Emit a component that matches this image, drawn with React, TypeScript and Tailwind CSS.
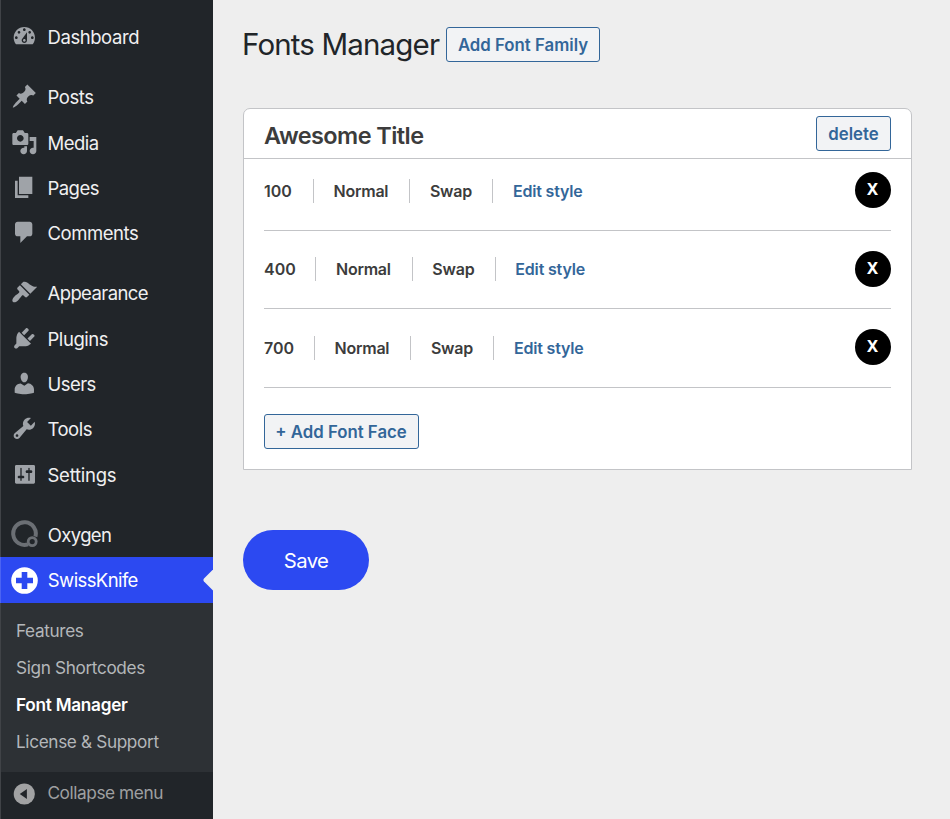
import React from "react";

type Item = { label: string; icon: string; track: string; gap?: boolean };

const items: Item[] = [
  { label: "Dashboard", track: "tracking-[-0.43px]", icon: "M3.76 16h12.48c1.1-1.37 1.76-3.11 1.76-5 0-4.42-3.58-8-8-8s-8 3.58-8 8c0 1.89.66 3.63 1.76 5zM10 4c.55 0 1 .45 1 1s-.45 1-1 1-1-.45-1-1 .45-1 1-1zM6 6c.55 0 1 .45 1 1s-.45 1-1 1-1-.45-1-1 .45-1 1-1zm8 0c.55 0 1 .45 1 1s-.45 1-1 1-1-.45-1-1 .45-1 1-1zm-5.37 5.55L12 7v6c0 1.1-.9 2-2 2s-2-.9-2-2c0-.57.24-1.08.63-1.45zM4 10c.55 0 1 .45 1 1s-.45 1-1 1-1-.45-1-1 .45-1 1-1zm12 0c.55 0 1 .45 1 1s-.45 1-1 1-1-.45-1-1 .45-1 1-1zm-5 3c0-.55-.45-1-1-1s-1 .45-1 1 .45 1 1 1 1-.45 1-1z" },
  { label: "Posts", gap: true, track: "tracking-[-0.4px]", icon: "M10.44 3.02l1.82-1.82 6.36 6.35-1.83 1.82c-1.05-.68-2.48-.57-3.41.36l-.75.75c-.92.93-1.04 2.35-.35 3.41l-1.83 1.82-2.41-2.41-2.8 2.79c-.42.42-3.38 2.71-3.8 2.29s1.86-3.39 2.28-3.81l2.79-2.79L4.1 9.36l1.83-1.82c1.05.69 2.48.57 3.4-.36l.75-.75c.93-.92 1.05-2.35.36-3.41z" },
  { label: "Media", track: "tracking-[-0.5px]", icon: "M13 11V4c0-.55-.45-1-1-1h-1.67L9 1H5L3.67 3H2c-.55 0-1 .45-1 1v7c0 .55.45 1 1 1h10c.55 0 1-.45 1-1zM7 4.5c1.38 0 2.5 1.12 2.5 2.5S8.38 9.5 7 9.5 4.5 8.38 4.5 7 5.62 4.5 7 4.5zM14 6h5v10.5c0 1.38-1.12 2.5-2.5 2.5S14 17.88 14 16.5s1.12-2.5 2.5-2.5c.17 0 .34.02.5.05V9h-3V6zm-4 8.05V13h2v3.5c0 1.38-1.12 2.5-2.5 2.5S7 17.88 7 16.5 8.12 14 9.5 14c.17 0 .34.02.5.05z" },
  { label: "Pages", track: "tracking-[-0.55px]", icon: "M6 15V2h10v13H6zm-1 1h8v2H3V5h2v11z" },
  { label: "Comments", track: "tracking-[-0.45px]", icon: "M5 2h9c1.1 0 2 .9 2 2v7c0 1.1-.9 2-2 2h-2l-5 5v-5H5c-1.1 0-2-.9-2-2V4c0-1.1.9-2 2-2z" },
  { label: "Appearance", gap: true, track: "tracking-[-0.6px]", icon: "M14.48 11.06L7.41 3.99l1.5-1.5c.5-.56 2.3-.47 3.51.32 1.21.8 1.43 1.28 2.91 2.1 1.18.64 2.45 1.26 4.45.85zm-.71.71L6.7 4.7 4.93 6.47c-.39.39-.39 1.02 0 1.41l1.06 1.06c.39.39.39 1.03 0 1.42-.6.6-1.43 1.11-2.21 1.69-.35.26-.7.53-1.01.84C1.43 14.23.4 16.08 1.4 17.07c.99 1 2.84-.03 4.18-1.36.31-.31.58-.66.85-1.02.57-.78 1.08-1.61 1.69-2.21.39-.39 1.02-.39 1.41 0l1.06 1.06c.39.39 1.02.39 1.41 0z" },
  { label: "Plugins", track: "tracking-[-0.45px]", icon: "M13.11 4.36L9.87 7.6 8 5.73l3.24-3.24c.35-.34 1.05-.2 1.56.32.52.51.66 1.21.31 1.55zm-8 1.77l.91-1.12 9.01 9.01-1.19.84c-.71.71-2.63 1.16-3.82 1.16H6.14L4.9 17.26c-.59.59-1.54.59-2.12 0-.59-.58-.59-1.53 0-2.12l1.24-1.24v-3.88c0-1.13.4-3.19 1.09-3.89zm7.26 3.97l3.24-3.24c.34-.35 1.04-.21 1.55.31.52.51.66 1.21.31 1.55l-3.24 3.25z" },
  { label: "Users", track: "tracking-[-0.55px]", icon: "M10 9.25c-2.27 0-2.73-3.44-2.73-3.44C7 4.02 7.82 2 9.97 2c2.16 0 2.98 2.02 2.71 3.81 0 0-.41 3.44-2.68 3.44zm0 2.57L12.72 10c2.39 0 4.52 2.33 4.52 4.53v2.49s-3.65 1.13-7.24 1.13c-3.65 0-7.24-1.13-7.24-1.13v-2.49c0-2.25 1.94-4.48 4.47-4.48z" },
  { label: "Tools", track: "tracking-[-0.5px]", icon: "M16.68 9.77c-1.34 1.34-3.3 1.67-4.95.99l-5.41 6.52c-.99.99-2.59.99-3.58 0s-.99-2.59 0-3.57l6.52-5.42c-.68-1.65-.35-3.61.99-4.95 1.28-1.28 3.12-1.62 4.72-1.06l-2.89 2.89 2.82 2.82 2.86-2.87c.53 1.58.18 3.39-1.08 4.65zM3.81 16.21c.4.39 1.04.39 1.43 0 .4-.4.4-1.04 0-1.43-.39-.4-1.03-.4-1.43 0-.39.39-.39 1.03 0 1.43z" },
  { label: "Settings", track: "tracking-[-0.25px]", icon: "M18 16V4c0-.55-.45-1-1-1H4c-.55 0-1 .45-1 1v12c0 .55.45 1 1 1h13c.55 0 1-.45 1-1zM8 11h1c.55 0 1 .45 1 1s-.45 1-1 1H8v1.5c0 .28-.22.5-.5.5s-.5-.22-.5-.5V13H6c-.55 0-1-.45-1-1s.45-1 1-1h1V5.5c0-.28.22-.5.5-.5s.5.22.5.5V11zm5-2h-1c-.55 0-1-.45-1-1s.45-1 1-1h1V5.5c0-.28.22-.5.5-.5s.5.22.5.5V7h1c.55 0 1 .45 1 1s-.45 1-1 1h-1v5.5c0 .28-.22.5-.5.5s-.5-.22-.5-.5V9z" },
];

const faces = [
  { weight: "100", w: "w-[49px]", h: "h-[72px]", pad: "pt-[13px]", drop: "mt-[7px]" },
  { weight: "400", w: "w-[51.4px]", h: "h-[78px]", pad: "pt-[20px]", drop: "mt-[6px]" },
  { weight: "700", w: "w-[50px]", h: "h-[79px]", pad: "pt-[20px]", drop: "mt-[7px]" },
];

const row = "flex h-[45.33px] shrink-0 items-center pl-[9.67px] text-[18.5px] leading-none";

function Label({ children, track }: { children: React.ReactNode; track: string }) {
  return <span className={"mt-[0.2px] ml-[10.2px] " + track}>{children}</span>;
}

function OutlineButton({ children, className }: { children: React.ReactNode; className: string }) {
  return (
    <button className={"flex h-[35px] items-center justify-center rounded-[3px] border border-[#336699] bg-[#f2f3f5] pt-[1.5px] text-[16.8px] leading-none font-semibold whitespace-nowrap text-[#336699] " + className}>
      {children}
    </button>
  );
}

function Sidebar() {
  return (
    <aside className="flex h-full w-[213px] shrink-0 flex-col border-l border-[#404347] bg-[#212529] pt-[14.8px] text-[#f0f0f1]">
      {items.map((it) => (
        <div key={it.label} className={row + (it.gap ? " mt-[14.67px]" : "")}>
          <svg viewBox="0 0 20 20" className="mb-[1.6px] h-[26.67px] w-[26.67px] fill-[#9fa3a8]">
            <path d={it.icon} />
          </svg>
          <Label track={it.track}>{it.label}</Label>
        </div>
      ))}
      <div className={row + " mt-[14.67px]"}>
        <svg viewBox="0 0 27 27" className="mb-[2px] h-[27px] w-[27px]" fill="none" stroke="#6b6f74">
          <path d="M17 24.3A11.3 11.3 0 1 1 24.4 16.6" strokeWidth="4" />
          <circle cx="21.2" cy="21.6" r="4" strokeWidth="2.8" />
        </svg>
        <Label track="tracking-[-0.65px]">Oxygen</Label>
      </div>
      <div className={row + " -ml-px justify-between border-l border-[#4c64f3] bg-[#2c49f1] text-white"}>
        <div className="flex items-center">
          <svg viewBox="0 0 27 27" className="h-[27px] w-[27px]">
            <circle cx="13.5" cy="13.5" r="13.3" fill="#fff" />
            <path d="M10.7 5h5.6v5.7H22v5.6h-5.7V22h-5.6v-5.7H5v-5.6h5.7z" fill="#2c49f1" />
          </svg>
          <Label track="tracking-[-0.6px]">SwissKnife</Label>
        </div>
        <svg viewBox="0 0 10.5 22" className="h-[22px] w-[10.5px] fill-[#eeeeee]">
          <path d="M10.5 0L1 9.6Q-.2 11 1 12.4L10.5 22z" />
        </svg>
      </div>
      <div className="flex h-[169.3px] shrink-0 flex-col bg-[#2d3135] pt-[9.8px] pl-[15px] text-[17.2px] tracking-[-0.35px] text-[#b4b7ba]">
        <span className="flex h-[37px] items-center">Features</span>
        <span className="flex h-[37px] items-center">Sign Shortcodes</span>
        <span className="flex h-[37px] items-center font-semibold tracking-[-0.26px] text-white">Font Manager</span>
        <span className="flex h-[37px] items-center">License &amp; Support</span>
      </div>
      <div className="flex h-[41px] items-center pl-[9.67px] text-[17.3px] leading-none text-[#9fa0a1]">
        <svg viewBox="0 0 26 26" className="mt-[2px] h-[26px] w-[26px]">
          <circle cx="13.3" cy="13" r="10.6" fill="#a1a2a3" />
          <path d="M15.9 8v10L8.8 13z" fill="#212529" />
        </svg>
        <Label track="tracking-[-0.45px] pl-[0.6px]">Collapse menu</Label>
      </div>
    </aside>
  );
}

export default function App() {
  return (
    <div className="flex h-[819px] w-[950px] overflow-hidden bg-[#eeeeee] font-['Inter','Liberation_Sans',sans-serif]">
      <Sidebar />
      <main className="flex flex-1 flex-col pt-[27px] pl-[30px]">
        <div className="flex h-[35px] items-center">
          <h1 className="-ml-px w-[204px] text-[29.5px] leading-none tracking-[-0.85px] whitespace-nowrap text-[#212529]">Fonts Manager</h1>
          <OutlineButton className="w-[154px]">Add Font Family</OutlineButton>
        </div>
        <section className="mt-[46px] h-[362px] w-[669px] rounded-t-[7px] border border-[#c3c4c7] bg-white">
          <header className="flex h-[50px] items-center justify-between border-b border-[#c3c4c7] px-[20px]">
            <h2 className="mt-[5px] text-[23.5px] leading-none font-semibold tracking-[-0.58px] text-[#3c3c3c]">Awesome Title</h2>
            <OutlineButton className="w-[75px]">delete</OutlineButton>
          </header>
          <div className="px-[20px]">
            {faces.map((f) => (
              <div key={f.weight} className={"flex items-start border-b border-[#c3c4c7] text-[16px] leading-[24px] font-semibold text-[#3c3c3c] " + f.h + " " + f.pad}>
                <div className={"flex h-[24px] " + f.drop}>
                  <span className={"shrink-0 " + f.w}>{f.weight}</span>
                  <span className="w-[96.3px] border-l border-[#c3c4c7] pl-[19.6px] tracking-[-0.25px]">Normal</span>
                  <span className="w-[83px] border-l border-[#c3c4c7] pl-[19.6px] tracking-[-0.2px]">Swap</span>
                  <span className="border-l border-[#c3c4c7] pl-[19.6px] tracking-[-0.17px] text-[#336699]">Edit style</span>
                </div>
                <button className="ml-auto flex h-[36px] w-[36px] items-center justify-center rounded-full bg-black pr-[1px] pb-[2px] font-['Noto_Sans','Liberation_Sans',sans-serif] text-[16.5px] leading-none font-bold text-white">X</button>
              </div>
            ))}
            <OutlineButton className="mt-[26px] w-[155px] pr-[1px]">+ Add Font Face</OutlineButton>
          </div>
        </section>
        <button className="mt-[60px] h-[60px] w-[126px] rounded-full bg-[#2c49f1] pt-[2px] text-[20.3px] tracking-[-0.6px] text-white">Save</button>
      </main>
    </div>
  );
}
